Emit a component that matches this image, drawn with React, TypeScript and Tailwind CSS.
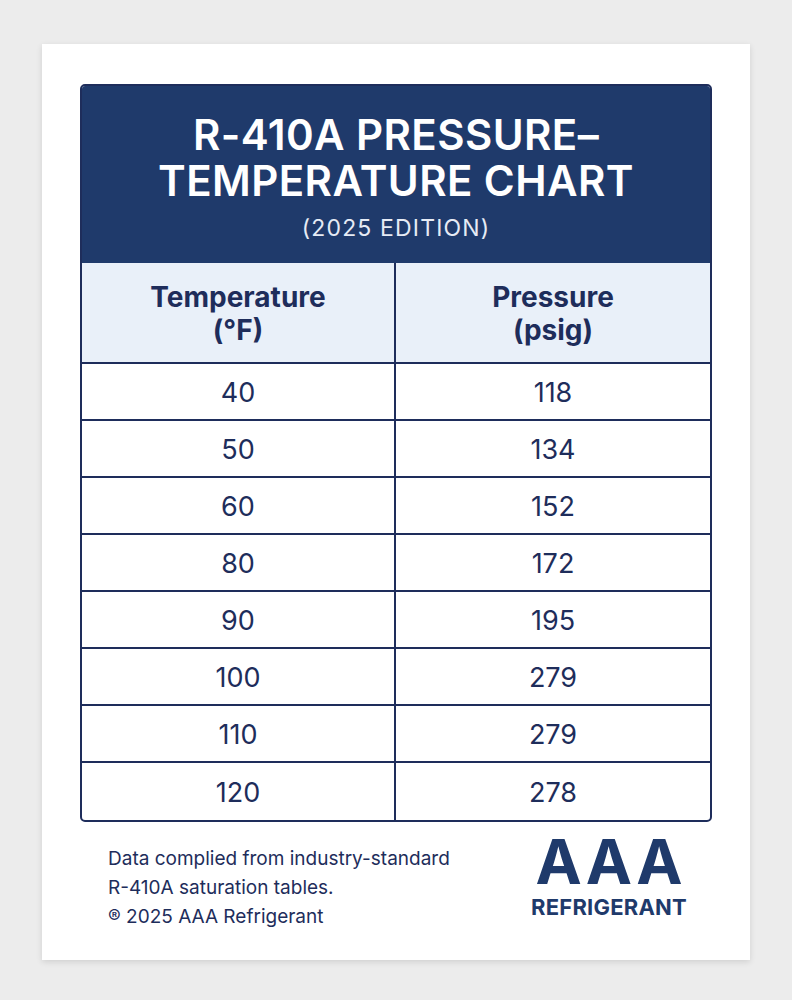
import React from "react";

const rows: [string, string][] = [
  ["40", "118"],
  ["50", "134"],
  ["60", "152"],
  ["80", "172"],
  ["90", "195"],
  ["100", "279"],
  ["110", "279"],
  ["120", "278"],
];

const App = () => {
  return (
    <div className="min-h-[1000px] w-[792px] bg-[#ececec] pt-[44px] pl-[42px] font-['Inter',sans-serif] text-[#1e2d5b]">
      <div className="w-[708px] h-[916px] bg-white shadow-[0_2px_6px_rgba(0,0,0,0.12)] px-[38px] pt-[40px]">
        <div className="rounded-[5px] border-2 border-[#1e2d5b] overflow-hidden">
          {/* title */}
          <div className="bg-[#1f3a6b] h-[177px] flex flex-col items-center pt-[26px] text-white">
            <p className="text-[42px] leading-[46px] font-semibold tracking-[0.01em] text-center">
              R-410A PRESSURE–
              <br />
              TEMPERATURE CHART
            </p>
            <p className="mt-[11px] text-[23px] leading-[26px] tracking-[0.05em] text-[#e6ebf5]">
              (2025 EDITION)
            </p>
          </div>
          {/* column headers */}
          <div className="grid grid-cols-2 bg-[#e9f0f9] border-b-2 border-[#1e2d5b] h-[101px]">
            <div className="border-r-2 border-[#1e2d5b] flex flex-col items-center justify-center font-bold text-[28px] leading-[33px] pt-[2px]">
              <span>Temperature</span>
              <span>(°F)</span>
            </div>
            <div className="flex flex-col items-center justify-center font-bold text-[28px] leading-[33px] pt-[2px]">
              <span>Pressure</span>
              <span>(psig)</span>
            </div>
          </div>
          {rows.map(([t, p], i) => (
            <div
              key={i}
              className={
                "grid grid-cols-2 h-[57px] " +
                (i < rows.length - 1 ? "border-b-2 border-[#1e2d5b]" : "")
              }
            >
              <div className="border-r-2 border-[#1e2d5b] flex items-center justify-center text-[27px] pt-[3px]">
                {t}
              </div>
              <div className="flex items-center justify-center text-[27px] pt-[3px]">{p}</div>
            </div>
          ))}
        </div>
        {/* footer */}
        <div className="flex justify-between items-start pl-[28px] pr-[25px] pt-[12px]">
          <div className="mt-[10px] text-[19px] leading-[29px] text-[#1e2d5b]">
            <p>Data complied from industry-standard</p>
            <p>R-410A saturation tables.</p>
            <p>® 2025 AAA Refrigerant</p>
          </div>
          <div className="flex flex-col items-center">
            <span className="text-[62px] leading-[56px] font-bold tracking-[0.05em] pl-[0.05em] text-[#1f3a6b]">
              AAA
            </span>
            <span className="mt-[6px] text-[22px] leading-[22px] font-bold tracking-[0.01em] text-[#1f3a6b]">
              REFRIGERANT
            </span>
          </div>
        </div>
      </div>
    </div>
  );
};

export default App;
